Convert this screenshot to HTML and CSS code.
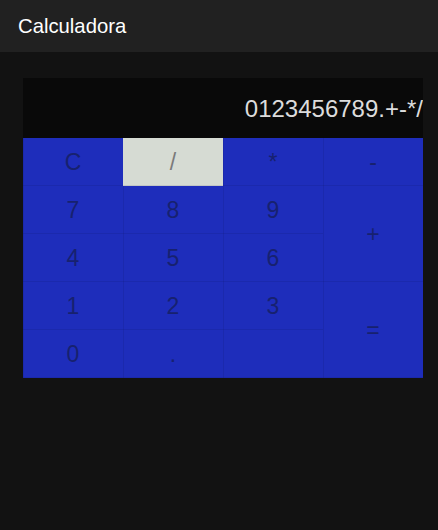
FILE: index.html
```html
<!DOCTYPE html>
<html lang="es">
<head>
<meta charset="utf-8">
<title>Calculadora</title>
<link rel="stylesheet" href="styles.css">
</head>
<body>
<header class="topbar">Calculadora</header>
<main class="main">
  <div class="calc">
    <div class="display">0123456789.+-*/</div>
    <div class="keys">
      <button class="key">C</button>
      <button class="key key-active">/</button>
      <button class="key">*</button>
      <button class="key">-</button>
      <button class="key">7</button>
      <button class="key">8</button>
      <button class="key">9</button>
      <button class="key key-tall">+</button>
      <button class="key">4</button>
      <button class="key">5</button>
      <button class="key">6</button>
      <button class="key">1</button>
      <button class="key">2</button>
      <button class="key">3</button>
      <button class="key key-tall">=</button>
      <button class="key">0</button>
      <button class="key">.</button>
      <button class="key"></button>
    </div>
  </div>
</main>
</body>
</html>
```
FILE: styles.css
```css
html, body {
  margin: 0;
  padding: 0;
  background: #121212;
  font-family: "Liberation Sans", Arial, sans-serif;
}
.topbar {
  height: 52px;
  background: #212121;
  color: #ffffff;
  font-size: 20.3px;
  display: flex;
  align-items: center;
  padding-left: 18px;
  box-sizing: border-box;
}
.main {
  padding: 26px 23px;
}
.calc {
  width: 400px;
}
.display {
  height: 60px;
  background: #090909;
  color: #dcdcdc;
  font-size: 24px;
  display: flex;
  align-items: center;
  justify-content: flex-end;
  white-space: nowrap;
  overflow: hidden;
  padding-top: 2px;
  box-sizing: border-box;
}
.keys {
  display: grid;
  grid-template-columns: repeat(4, 100px);
  grid-auto-rows: 48px;
  background: #1e2dbb;
}
.key {
  margin: 0;
  padding: 0;
  border: 0;
  box-shadow: inset 1px 0 0 rgba(0, 0, 0, 0.07), inset 0 -1px 0 rgba(0, 0, 0, 0.07);
  background: #1e2dbb;
  color: #17216f;
  font-family: "Liberation Sans", Arial, sans-serif;
  font-size: 23px;
  display: flex;
  align-items: center;
  justify-content: center;
}
.key-active {
  background: #d6dbd3;
  color: #7a7a7a;
  box-shadow: inset 0 -1px 0 #c2c6c4;
}
.key-tall {
  grid-column: 4;
  grid-row: span 2;
}
```
